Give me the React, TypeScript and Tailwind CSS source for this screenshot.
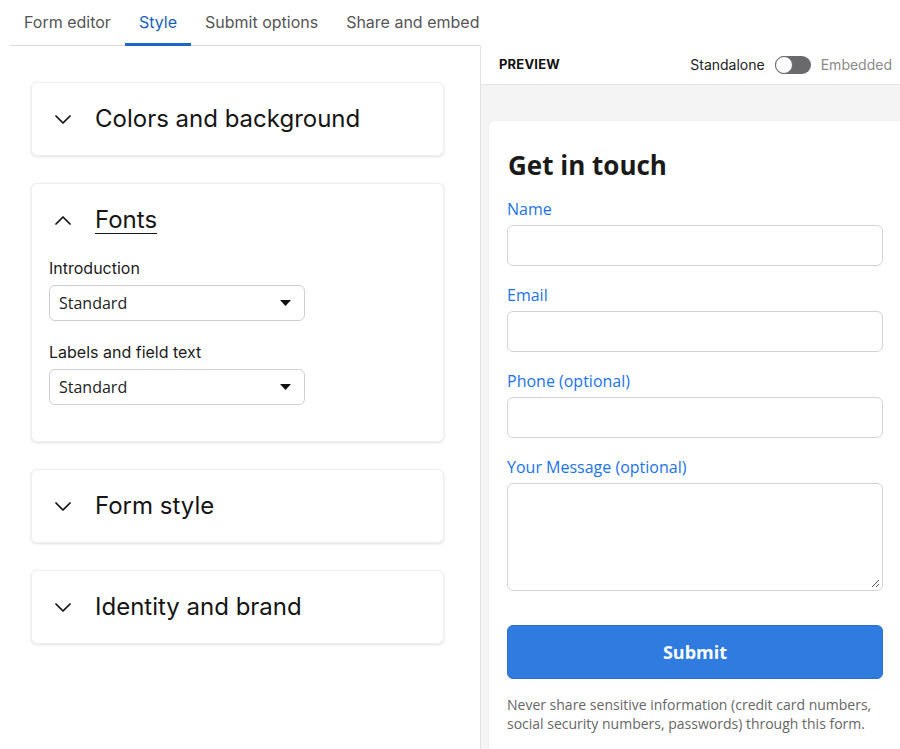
const inter = { fontFamily: 'Inter, "Liberation Sans", sans-serif' };

function Chevron({ up = false }: { up?: boolean }) {
    return (
        <svg width="16" height="9" viewBox="0 0 16 9" className="shrink-0">
            <polyline
                points={up ? '1,8 8,1 15,8' : '1,1 8,8 15,1'}
                fill="none"
                stroke="#111"
                strokeWidth="1.7"
                strokeLinecap="round"
                strokeLinejoin="round"
            />
        </svg>
    );
}

function Section({ title, open = false, children }: { title: string; open?: boolean; children?: React.ReactNode }) {
    return (
        <div className="bg-white rounded-md border border-[#efefef] shadow-[0_1px_3px_rgba(0,0,0,0.13)]">
            <div className="h-[72px] flex items-center pl-[23px]">
                <Chevron up={open} />
                <span className={`ml-[24px] text-[24px] text-[#151515] ${open ? 'underline underline-offset-[5px] decoration-1' : ''}`}>
                    {title}
                </span>
            </div>
            {children}
        </div>
    );
}

function FontSelect({ label }: { label: string }) {
    return (
        <div className="mb-[20px]">
            <div className="text-[16px] text-[#1b1b1b] leading-[22px] mb-[6px]">{label}</div>
            <div className="w-[256px] h-[36px] border border-[#cfcfcf] rounded-md flex items-center justify-between pl-[9px] pr-[13px]">
                <span className="text-[16px] text-[#222] font-['Open_Sans',sans-serif]">Standard</span>
                <svg width="11" height="6" viewBox="0 0 11 6">
                    <path d="M0 0 L11 0 L5.5 6 Z" fill="#111" />
                </svg>
            </div>
        </div>
    );
}

function Field({ label, tall = false }: { label: string; tall?: boolean }) {
    return (
        <div className="mb-[18px]">
            <div className="text-[16px] leading-[22px] text-[#1a73e8] mb-[5px]">{label}</div>
            {tall ? (
                <div className="relative h-[108px] border border-[#d3d3d3] rounded-md bg-white">
                    <svg className="absolute right-[2px] bottom-[2px]" width="10" height="10" viewBox="0 0 10 10">
                        <path d="M9 2 L2 9 M9 6 L6 9" stroke="#555" strokeWidth="1" />
                    </svg>
                </div>
            ) : (
                <div className="h-[41px] border border-[#d3d3d3] rounded-md bg-white" />
            )}
        </div>
    );
}

export default function App() {
    const tabs = ['Form editor', 'Style', 'Submit options', 'Share and embed'];
    return (
        <div className="w-[900px] h-[749px] overflow-hidden bg-white flex flex-col" style={inter}>
            <div className="h-[46px] shrink-0">
                <div className="ml-[10px] w-[483px] h-[46px] border-b border-[#d9d9d9] flex">
                    {tabs.map((t) => (
                        <div
                            key={t}
                            className={`px-[14px] shrink-0 whitespace-nowrap flex items-center text-[16px] pb-[2px] ${
                                t === 'Style'
                                    ? 'text-[#1a5fb8] border-b-[3px] border-[#1a66c9] -mb-[1px] pt-[3px]'
                                    : 'text-[#555]'
                            }`}
                        >
                            {t}
                        </div>
                    ))}
                </div>
            </div>
            <div className="flex flex-1 min-h-0 -mt-[1px]">
                <div className="w-[480px] shrink-0 pl-[31px] pr-[36px] pt-[37px] flex flex-col gap-[27px]">
                    <Section title="Colors and background" />
                    <Section title="Fonts" open>
                        <div className="px-[17px] pt-[1px] pb-[16px]">
                            <FontSelect label="Introduction" />
                            <FontSelect label="Labels and field text" />
                        </div>
                    </Section>
                    <Section title="Form style" />
                    <Section title="Identity and brand" />
                </div>
                <div className="flex-1 border-l border-[#e3e3e3] bg-[#f4f4f4] flex flex-col overflow-hidden">
                    <div className="h-[40px] shrink-0 bg-white border-b border-[#e6e6e6] flex items-center pl-[18px] pr-[8px]">
                        <span className="text-[13px] font-bold text-[#111] tracking-[0.2px]">PREVIEW</span>
                        <div className="ml-auto flex items-center">
                            <span className="text-[14px] text-[#222]">Standalone</span>
                            <div className="ml-[10px] w-[36px] h-[18px] rounded-full bg-[#6a6a6c] relative">
                                <div className="absolute left-0 top-0 w-[18px] h-[18px] rounded-full bg-white border-[1.5px] border-[#6a6a6c]" />
                            </div>
                            <span className="ml-[10px] text-[14px] text-[#8a8a8a]">Embedded</span>
                        </div>
                    </div>
                    <div className="pt-[36px] pl-[8px]">
                        <div
                            className="w-[430px] bg-white rounded-l-md shadow-[0_0_2px_rgba(0,0,0,0.08)] pl-[18px] pr-[36px] pt-[26px] pb-[40px]"
                            style={{ fontFamily: '"Open Sans", "Liberation Sans", sans-serif' }}
                        >
                            <h1 className="text-[26px] font-bold text-[#1a1a1a] leading-[36px] mb-[15px] pl-[1px]">Get in touch</h1>
                            <Field label="Name" />
                            <Field label="Email" />
                            <Field label="Phone (optional)" />
                            <Field label="Your Message (optional)" tall />
                            <div className="mt-[34px] h-[54px] rounded-md bg-[#2f7be0] border border-[#2a6fcc] flex items-center justify-center text-white text-[18px] font-bold">
                                Submit
                            </div>
                            <p className="mt-[16px] text-[14px] leading-[19px] text-[#666]">
                                Never share sensitive information (credit card numbers, social security numbers, passwords) through this form.
                            </p>
                        </div>
                    </div>
                </div>
            </div>
        </div>
    );
}
